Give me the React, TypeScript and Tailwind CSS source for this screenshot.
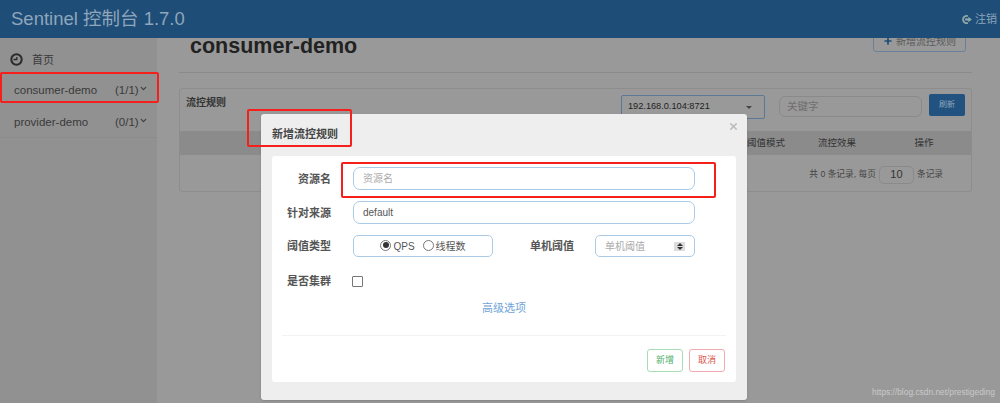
import { ChevronDown, Plus, X } from 'lucide-react';

const font = { fontFamily: '"Liberation Sans", "Noto Sans CJK SC", sans-serif' };

function FieldLabel({ text }: { text: string }) {
  return <label className="block w-[59px] shrink-0 text-right text-[11px] font-bold leading-[16px] text-[#555]">{text}</label>;
}

function SideItem({ name, count }: { name: string; count: string }) {
  return (
    <div className="flex h-[32px] items-center pl-[14px] text-[11.5px] text-[#3a3a3a]">
      <span className="w-[101px]">{name}</span>
      <span>{count}</span>
      <ChevronDown className="mb-[5px] h-[9px] w-[9px]" strokeWidth={3} />
    </div>
  );
}

export default function App() {
  return (
    <div style={font} className="relative flex h-[403px] w-[1000px] flex-col overflow-hidden bg-[#999]">
      <header className="z-10 flex h-[38px] shrink-0 items-center justify-between bg-[#1e4d78] pl-[11px] pr-[3px]">
        <span className="text-[18.5px] text-[#8fa6bb]">Sentinel 控制台 1.7.0</span>
        <span className="flex items-center gap-[3px] text-[11px] text-[#8fa6bb]">
          <svg viewBox="0 0 12 12" className="h-[11px] w-[11px] text-[#8fa9a8]" fill="none" stroke="currentColor">
            <path d="M7.5 2.2 A4 4 0 1 0 7.5 9.8" strokeWidth="2" />
            <path d="M4.5 6 H9" strokeWidth="2.4" />
            <path d="M8 3 L11.8 6 L8 9 Z" fill="currentColor" stroke="none" />
          </svg>
          注销
        </span>
      </header>

      <div className="flex flex-1">
        <aside className="h-full w-[157px] shrink-0 bg-[#919191]">
          <div className="h-[100px] border-b border-[#8c8c8c]">
            <div className="flex h-[37px] items-end pb-[7px] pl-[10px] text-[11px] text-[#3a3a3a]">
              <svg viewBox="0 0 13 13" className="mb-[2px] mr-[9px] h-[13px] w-[13px] text-[#2b2b2b]" fill="none" stroke="currentColor">
                <circle cx="6.5" cy="6.5" r="5.2" strokeWidth="2" />
                <path d="M3.5 6.5 H6.8 V4" strokeWidth="1.3" />
              </svg>
              首页
            </div>
            <SideItem name="consumer-demo" count="(1/1)" />
            <SideItem name="provider-demo" count="(0/1)" />
          </div>
        </aside>

        <main className="-mt-[10px] flex-1 pl-[22px] pr-[28px]">
          <div className="flex h-[24px] justify-between pr-[6px]">
            <h1 className="ml-[11px] mt-[6px] text-[21.5px] font-bold leading-[24px] text-[#222]">consumer-demo</h1>
            <button className="flex h-[24px] w-[93px] items-center justify-center gap-[3px] rounded-[3px] border border-[#6b8199] pt-[2px] text-[10px] text-[#5a5a5a]">
              <Plus className="h-[10px] w-[10px] text-[#1e4d78]" strokeWidth={4} />
              新增流控规则
            </button>
          </div>
          <div className="mt-[20px] h-px bg-[#8a8a8a]" />

          <section className="mt-[15px] h-[104px] rounded-[3px] border border-[#8d8d8d]">
            <div className="flex h-[42px] px-[6px]">
              <span className="mt-[6px] text-[10px] font-bold text-[#333]">流控规则</span>
              <div className="ml-auto mt-[6px] flex h-[24px] w-[144px] items-center justify-between rounded-[2px] border border-[#5b7896] pl-[6px] pr-[12px] text-[9.2px] text-[#222]">
                192.168.0.104:8721
                <span className="h-0 w-0 border-x-[3px] border-t-[3px] border-x-transparent border-t-[#444]" />
              </div>
              <div className="ml-[14px] mt-[7px] flex h-[21px] w-[143px] items-center rounded-[6px] border border-[#8a8a8a] pl-[7px] text-[10.5px] text-[#6e6e6e]">关键字</div>
              <button className="ml-[7px] mt-[5px] h-[22px] w-[36px] rounded-[2px] bg-[#22527f] text-[8px] text-[#8fa6bb]">刷新</button>
            </div>
            <div className="grid h-[24px] grid-cols-[1fr_62px_80px_94px] items-center bg-[#8b8b8b] text-center text-[9.5px] text-[#333]">
              <span />
              <span>阈值模式</span>
              <span>流控效果</span>
              <span>操作</span>
            </div>
            <div className="flex h-[36px] items-center justify-end pr-[28px] pt-[3px] text-[8.7px] text-[#444]">
              共 0 条记录, 每页
              <span className="mx-[3px] flex h-[18px] w-[35px] items-center justify-center rounded-[5px] border border-[#8a8a8a] text-[11px] text-[#333]">10</span>
              条记录
            </div>
          </section>
        </main>
      </div>

      {/* 弹窗 */}
      <div className="absolute left-[261px] top-[114px] z-20 h-[286px] w-[486px] rounded-[3px] bg-[#eee] px-[11px] shadow-sm">
        <div className="flex h-[42px] items-center justify-between pb-[2px]">
          <span className="text-[11px] font-bold text-[#444]">新增流控规则</span>
          <X className="mb-[16px] mr-[-3px] h-[11px] w-[11px] text-[#bbb]" strokeWidth={3.5} />
        </div>
        <div className="h-[226px] rounded-[3px] bg-white pt-[11px]">
          <div className="flex items-center gap-[22px]">
            <FieldLabel text="资源名" />
            <div className="flex h-[23px] w-[342px] items-center rounded-[7px] border border-[#a9cbe8] pl-[9px] text-[10px] text-[#aaa]">资源名</div>
          </div>
          <div className="mt-[11px] flex items-center gap-[22px]">
            <FieldLabel text="针对来源" />
            <div className="flex h-[23px] w-[342px] items-center rounded-[7px] border border-[#a9cbe8] pl-[9px] text-[10px] text-[#555]">default</div>
          </div>
          <div className="mt-[11px] flex items-center gap-[22px]">
            <FieldLabel text="阈值类型" />
            <div className="flex h-[22px] w-[140px] items-center justify-center gap-[8px] rounded-[5px] border border-[#a9cbe8] text-[10px] text-[#555]">
              <span className="flex items-center gap-[2px]">
                <span className="mb-[2px] flex h-[11px] w-[11px] items-center justify-center rounded-full border border-[#777]">
                  <span className="h-[6px] w-[6px] rounded-full bg-[#333]" />
                </span>
                QPS
              </span>
              <span className="flex items-center gap-[2px]">
                <span className="mb-[2px] h-[11px] w-[11px] rounded-full border border-[#777]" />
                线程数
              </span>
            </div>
            <FieldLabel text="单机阈值" />
            <div className="-ml-px flex h-[22px] w-[100px] items-center justify-between rounded-[5px] border border-[#a9cbe8] px-[9px] text-[10px] text-[#aaa]">
              单机阈值
              <span className="flex h-[9px] w-[11px] flex-col items-center justify-center gap-px bg-[#ddd]">
                <span className="h-0 w-0 border-x-[3px] border-b-[3px] border-x-transparent border-b-[#333]" />
                <span className="h-0 w-0 border-x-[3px] border-t-[3px] border-x-transparent border-t-[#333]" />
              </span>
            </div>
          </div>
          <div className="mt-[16px] flex items-center gap-[22px]">
            <FieldLabel text="是否集群" />
            <span className="-ml-px h-[11px] w-[11px] rounded-[1px] border border-[#777]" />
          </div>
          <div className="mt-[11px] text-center text-[11px] leading-[16px] text-[#6fa3d8]">高级选项</div>
          <div className="mx-[10px] mt-[19px] h-px bg-[#f2f2f2]" />
          <div className="mt-[13px] flex justify-end gap-[6px] pr-[11px]">
            <button className="h-[23px] w-[36px] rounded-[3px] border border-[#a8dcb5] text-[9px] text-[#4caf6a]">新增</button>
            <button className="h-[23px] w-[36px] rounded-[3px] border border-[#f3a9b0] text-[9px] text-[#d9534f]">取消</button>
          </div>
        </div>
      </div>

      {/* 红色标注框 */}
      <div className="absolute left-0 top-[72px] z-30 h-[31px] w-[159px] rounded-[2px] border-[2px] border-[#f5201c]" />
      <div className="absolute left-[247px] top-[109px] z-30 h-[38px] w-[105px] rounded-[2px] border-[2px] border-[#f5201c]" />
      <div className="absolute left-[341px] top-[162px] z-30 h-[36px] w-[375px] rounded-[2px] border-[2px] border-[#f5201c]" />

      <span className="absolute bottom-[4px] right-[5px] z-30 text-[8.4px] text-[#c9c9c9]">https://blog.csdn.net/prestigeding</span>
    </div>
  );
}
